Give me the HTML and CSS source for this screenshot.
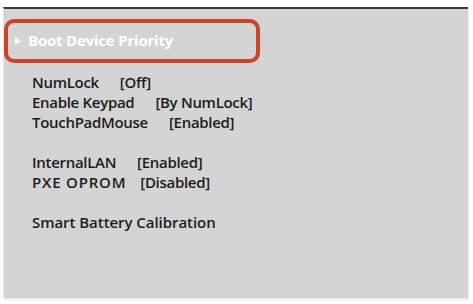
FILE: index.html
```html
<!DOCTYPE html>
<html>
<head>
<meta charset="utf-8">
<link rel="stylesheet" href="styles.css">
</head>
<body>
<div class="panel">
  <div class="selected">
    <span class="arrow"></span><span class="sel-text">Boot Device Priority</span>
  </div>
  <div class="group">
    <div class="row"><span class="label">NumLock</span><span class="value">[Off]</span></div>
    <div class="row"><span class="label">Enable Keypad</span><span class="value">[By NumLock]</span></div>
    <div class="row"><span class="label">TouchPadMouse</span><span class="value">[Enabled]</span></div>
  </div>
  <div class="group">
    <div class="row"><span class="label">InternalLAN</span><span class="value">[Enabled]</span></div>
    <div class="row"><span class="label caps">PXE OPROM</span><span class="value narrow">[Disabled]</span></div>
  </div>
  <div class="group">
    <div class="row"><span class="label wide">Smart Battery Calibration</span></div>
  </div>
</div>
</body>
</html>
```
FILE: styles.css
```css
html, body {
  margin: 0;
  padding: 0;
  background: #ffffff;
}
body {
  width: 473px;
  height: 304px;
  overflow: hidden;
  font-family: "Open Sans", "Noto Sans", sans-serif;
}
.panel {
  box-sizing: border-box;
  margin: 7px 5px 0 3px;
  height: 291px;
  background: #d4d4d4;
  border-top: 2px solid #3a3a3a;
  border-left: 1px solid #e4e4e4;
  box-shadow: 1px 2px 2px rgba(0,0,0,0.08);
  padding-top: 10px;
}
.selected {
  box-sizing: border-box;
  width: 256px;
  height: 44px;
  border: 4px solid #c8442c;
  border-radius: 10px;
  display: flex;
  align-items: center;
  padding-left: 7px;
  color: #ffffff;
}
.arrow {
  width: 0;
  height: 0;
  border-left: 6px solid rgba(255,255,255,0.9);
  border-top: 4px solid transparent;
  border-bottom: 4px solid transparent;
  margin-right: 7px;
  margin-top: -1px;
}
.sel-text {
  font-weight: 700;
  font-size: 15px;
  letter-spacing: -0.2px;
  margin-top: -3px;
}
.group {
  margin-left: 28px;
  margin-top: 9px;
}
.group + .group {
  margin-top: 20px;
}
.row {
  font-size: 15px;
  line-height: 20px;
  font-weight: 600;
  color: #1c1c1c;
  letter-spacing: -0.3px;
  white-space: nowrap;
}
.label.caps {
  letter-spacing: 0.8px;
}
.label.wide {
  letter-spacing: -0.05px;
}
.value {
  margin-left: 21px;
}
.value.narrow {
  margin-left: 14px;
}
```
